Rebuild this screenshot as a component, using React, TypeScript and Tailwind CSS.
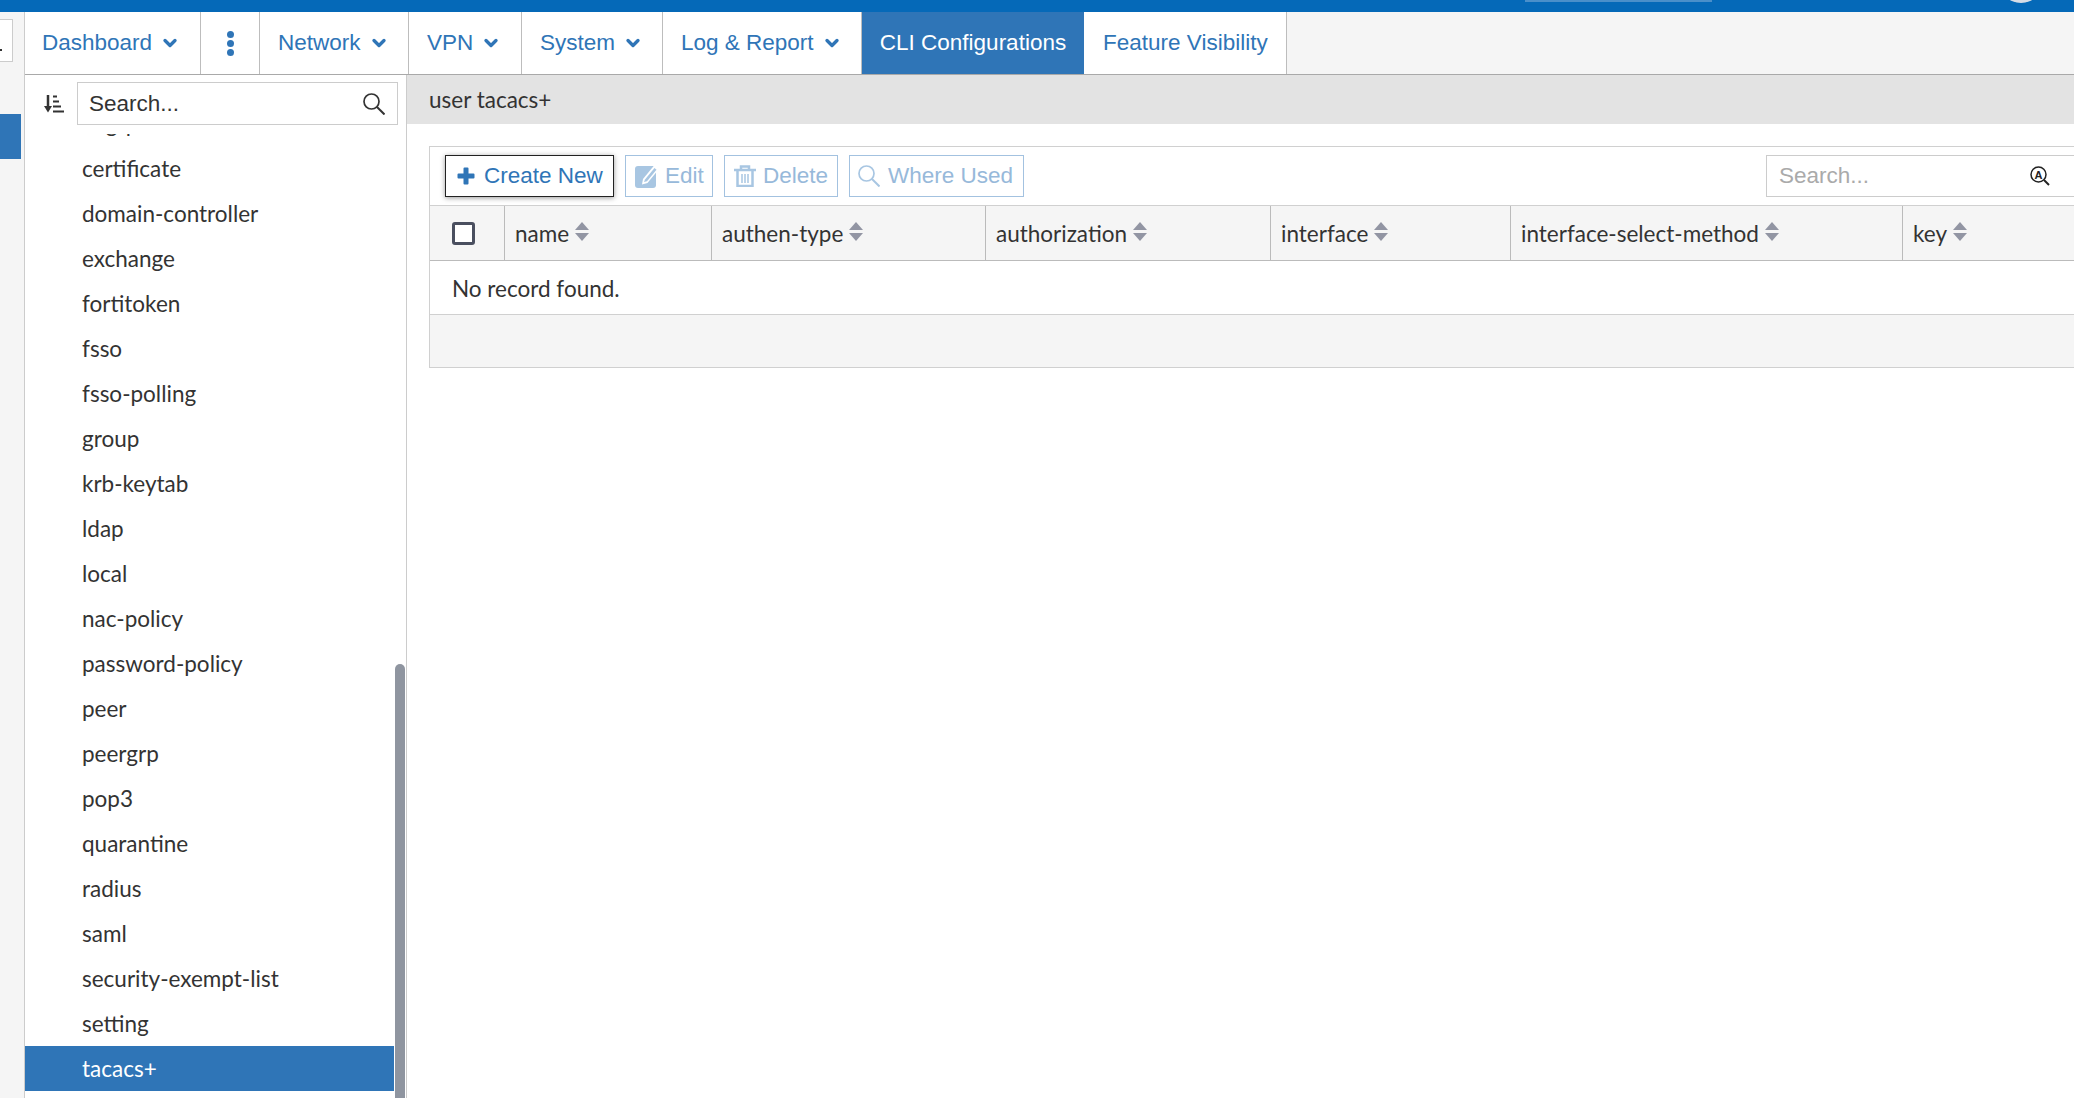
import { ChevronDown } from "lucide-react";

const NAV_ITEMS = [
  { label: "Dashboard", width: "w-[176px]", padding: "pl-[17px]" },
  { label: "Network", width: "w-[149px]", padding: "pl-[18px]" },
  { label: "VPN", width: "w-[113px]", padding: "pl-[18px]" },
  { label: "System", width: "w-[141px]", padding: "pl-[18px]" },
  { label: "Log & Report", width: "w-[199px]", padding: "pl-[18px]" },
];

const LIST_ITEMS = [
  "adgrp",
  "certificate",
  "domain-controller",
  "exchange",
  "fortitoken",
  "fsso",
  "fsso-polling",
  "group",
  "krb-keytab",
  "ldap",
  "local",
  "nac-policy",
  "password-policy",
  "peer",
  "peergrp",
  "pop3",
  "quarantine",
  "radius",
  "saml",
  "security-exempt-list",
  "setting",
  "tacacs+",
];

const COLUMNS = [
  { label: "name", width: "w-[207px]" },
  { label: "authen-type", width: "w-[274px]" },
  { label: "authorization", width: "w-[285px]" },
  { label: "interface", width: "w-[240px]" },
  { label: "interface-select-method", width: "w-[392px]" },
  { label: "key", width: "w-[200px]" },
];

function SortArrows() {
  return (
    <svg viewBox="0 0 14 19" className="mb-[5px] ml-[6px] h-[19px] w-[14px] shrink-0 fill-[#9295a3]">
      <path d="M7 0 14 8H0z" />
      <path d="M0 11h14l-7 8z" />
    </svg>
  );
}

function Magnifier({ className }: { className: string }) {
  return (
    <svg viewBox="0 0 22 22" className={`size-[22px] shrink-0 fill-none ${className}`}>
      <circle cx="8.500" cy="8.500" r="7.500" strokeWidth="1.700" />
      <path d="M14 14l7.500 7.500" strokeWidth="2" />
    </svg>
  );
}

function NavItem({ label, width, padding }: { label: string; width: string; padding: string }) {
  return (
    <div className={`flex ${width} ${padding} shrink-0 items-center gap-[8px] border-r border-[#bdbdbd] bg-white`}>
      <span>{label}</span>
      <ChevronDown size={20} strokeWidth={4} />
    </div>
  );
}

export default function App() {
  return (
    <div className="flex h-[1098px] w-[2074px] flex-col overflow-hidden bg-white font-['Lato',sans-serif] text-[22.5px] text-[#333]">
      <div className="relative h-3 shrink-0 overflow-hidden bg-[#0569b8]">
        <div className="absolute left-[1525px] top-0 h-[2px] w-[187px] bg-[#4a8fca]" />
        <div className="absolute left-[1999px] top-[-41px] size-[44px] rounded-full bg-[#d8dde6]" />
      </div>

      <div className="flex min-h-0 flex-1">
        <div className="relative w-[25px] shrink-0 border-r border-[#cccccc] bg-[#f5f5f5]">
          <div className="absolute left-0 top-[7px] h-[43px] w-[13px] border border-l-0 border-[#cccccc] bg-white">
            <div className="absolute left-0 top-[29px] size-[2px] bg-[#333]" />
          </div>
          <div className="absolute left-0 top-[102px] h-[45px] w-[21px] bg-[#2f75b7]" />
        </div>

        <div className="flex min-w-0 flex-1 flex-col">
          <nav className="flex h-[63px] shrink-0 border-b border-[#a9a9a9] bg-[#f5f5f5] font-['Liberation_Sans',sans-serif] text-[#2f75b7]">
            <NavItem {...NAV_ITEMS[0]} />
            <div className="flex w-[59px] shrink-0 flex-col items-center justify-center gap-[2px] border-r border-[#bdbdbd] bg-white">
              <span className="size-[7px] rounded-full bg-[#2f75b7]" />
              <span className="size-[7px] rounded-full bg-[#2f75b7]" />
              <span className="size-[7px] rounded-full bg-[#2f75b7]" />
            </div>
            {NAV_ITEMS.slice(1).map((item) => (
              <NavItem key={item.label} {...item} />
            ))}
            <div className="flex w-[222px] shrink-0 items-center justify-center bg-[#2f75b7] text-white">CLI Configurations</div>
            <div className="flex w-[203px] shrink-0 items-center border-r border-[#bdbdbd] bg-white pl-[19px]">Feature Visibility</div>
          </nav>

          <div className="flex min-h-0 flex-1">
            <aside className="relative flex w-[382px] shrink-0 flex-col border-r border-[#cccccc]">
              <div className="flex h-[59px] shrink-0 items-center pb-[3px] pl-[19px] pt-[1px]">
                <svg viewBox="0 0 20 18" className="h-[18px] w-[20px] shrink-0 fill-[#333] stroke-[#333]">
                  <path d="M4 0v12" strokeWidth="2.500" fill="none" />
                  <path d="M0 11h8l-4 6.500z" stroke="none" />
                  <path d="M9 1.500h4M9 6.500h6M9 11.500h8M9 16.500h11" strokeWidth="2" fill="none" />
                </svg>
                <div className="ml-[13px] flex h-[43px] w-[321px] items-center justify-between border border-[#cccccc] pl-[11px] pr-[12px] font-['Liberation_Sans',sans-serif]">
                  <span>Search...</span>
                  <Magnifier className="stroke-[#333]" />
                </div>
              </div>
              <div className="min-h-0 flex-1 overflow-hidden">
                <ul className="-mt-[33px]">
                  {LIST_ITEMS.map((item) => (
                    <li
                      key={item}
                      className={`flex h-[45px] w-[369px] items-center pl-[57px] ${item === "tacacs+" ? "bg-[#2f75b7] text-white" : ""}`}
                    >
                      {item}
                    </li>
                  ))}
                </ul>
              </div>
              <div className="absolute bottom-0 right-[1px] h-[434px] w-[10px] rounded-t-[5px] bg-[#8f95a0]" />
            </aside>

            <main className="min-w-0 flex-1">
              <div className="flex h-[49px] items-center bg-[#e3e3e3] pl-[22px] pt-[1px]">user tacacs+</div>
              <div className="ml-[22px] mt-[22px] w-[1700px] border border-[#d0d0d0]">
                <div className="flex h-[59px] items-center gap-[11px] border-b border-[#d0d0d0] pl-[15px] font-['Liberation_Sans',sans-serif]">
                  <button className="flex h-[42px] w-[169px] shrink-0 items-center gap-[9px] border border-[#222] pl-[11px] text-[#2f75b7] shadow-[0_1px_5px_rgba(0,0,0,0.4)]">
                    <svg viewBox="0 0 18 18" className="size-[18px] shrink-0 fill-[#2f75b7]">
                      <path d="M6.500 1.500a1 1 0 0 1 1-1h3a1 1 0 0 1 1 1v5h5a1 1 0 0 1 1 1v3a1 1 0 0 1-1 1h-5v5a1 1 0 0 1-1 1h-3a1 1 0 0 1-1-1v-5h-5a1 1 0 0 1-1-1v-3a1 1 0 0 1 1-1h5z" />
                    </svg>
                    Create New
                  </button>
                  <button className="flex h-[42px] w-[88px] shrink-0 items-center gap-[6px] border border-[#a3c2e0] pl-[9px] text-[#97b9da]">
                    <svg viewBox="0 0 24 23" className="h-[23px] w-[24px] shrink-0">
                      <rect x="0" y="1" width="21" height="22" rx="3" fill="#a8c6e2" />
                      <path d="M8 14 19.500 0 24 4 12.500 18l-5.500 1.500z" fill="#ffffff" />
                      <path d="M10 14.500 19.500 3l2 1.800-9.500 11.500-3 .8z" fill="#a8c6e2" />
                    </svg>
                    Edit
                  </button>
                  <button className="flex h-[42px] w-[114px] shrink-0 items-center gap-[7px] border border-[#a3c2e0] pl-[9px] text-[#97b9da]">
                    <svg viewBox="0 0 22 22" className="size-[22px] shrink-0 fill-none stroke-[#a8c6e2]">
                      <path d="M0 5h22M7 5V1.500h8V5" strokeWidth="2.500" />
                      <path d="M3.500 5v16h15V5" strokeWidth="2.500" />
                      <path d="M8 9v9M11 9v9M14 9v9" strokeWidth="1.500" />
                    </svg>
                    Delete
                  </button>
                  <button className="flex h-[42px] w-[175px] shrink-0 items-center gap-[8px] border border-[#a3c2e0] pl-[8px] text-[#97b9da]">
                    <Magnifier className="stroke-[#a8c6e2]" />
                    Where Used
                  </button>
                  <div className="ml-[731px] flex h-[42px] w-[340px] shrink-0 items-center justify-between border border-[#cccccc] pl-[12px] pr-[55px] text-[#aaaaaa]">
                    Search...
                    <svg viewBox="0 0 20 20" className="size-[20px] shrink-0 fill-none stroke-[#222]">
                      <circle cx="8.500" cy="8.500" r="7.500" strokeWidth="1.500" />
                      <path d="M14 14l5 5" strokeWidth="2" />
                      <text x="8.500" y="12.500" textAnchor="middle" fontSize="11" fontWeight="700" fontFamily="Liberation Sans, sans-serif" fill="#222" stroke="none">
                        A
                      </text>
                    </svg>
                  </div>
                </div>

                <div className="flex h-[55px] border-b border-[#bbbbbb] bg-[#f5f5f5]">
                  <div className="flex w-[75px] shrink-0 items-center border-r border-[#bbbbbb] pl-[22px]">
                    <span className="size-[23px] rounded-[3px] border-[3px] border-[#4a4f5f] bg-white" />
                  </div>
                  {COLUMNS.map((col) => (
                    <div key={col.label} className={`flex ${col.width} shrink-0 items-center border-r border-[#bbbbbb] pl-[10px] pt-[2px] last:border-r-0`}>
                      <span>{col.label}</span>
                      <SortArrows />
                    </div>
                  ))}
                </div>

                <div className="flex h-[54px] items-center border-b border-[#d0d0d0] pl-[22px] pt-[2px]">No record found.</div>
                <div className="h-[52px] bg-[#f5f5f5]" />
              </div>
            </main>
          </div>
        </div>
      </div>
    </div>
  );
}
